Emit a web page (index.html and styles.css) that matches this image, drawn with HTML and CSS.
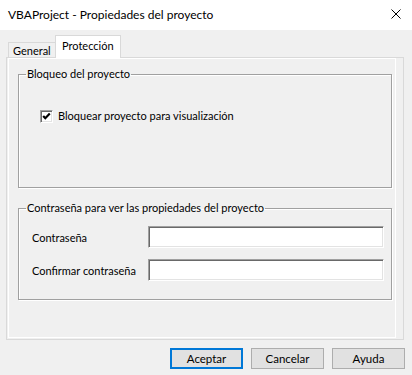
FILE: index.html
```html
<!DOCTYPE html>
<html lang="es">

<head>
    <meta charset="UTF-8">
    <meta name="viewport" content="width=device-width, initial-scale=1.0">
    <title>VBAProject - Propiedades del proyecto</title>
    <link rel="stylesheet" href="styles.css">
</head>

<body>
    <div class="titlebar">
        <span class="title">VBAProject - Propiedades del proyecto</span>
        <svg class="close" width="10" height="10" viewBox="0 0 10 10">
            <path d="M0.5 0.5 L9.5 9.5 M9.5 0.5 L0.5 9.5" stroke="#000" stroke-width="1" fill="none" />
        </svg>
    </div>

    <div class="tabs">
        <div class="tab">General</div>
        <div class="tab activo">Protección</div>
    </div>

    <div class="panel">
        <div class="pagina">
            <fieldset class="grupo bloqueo">
                <legend>Bloqueo del proyecto</legend>
                <label class="casilla">
                    <span class="caja">
                        <svg width="9" height="9" viewBox="0 0 9 9">
                            <polyline points="1.2,4 3.3,6.2 7.8,1.6" stroke="#000" stroke-width="2.2" fill="none" />
                        </svg>
                    </span>
                    Bloquear proyecto para visualización
                </label>
            </fieldset>

            <fieldset class="grupo clave">
                <legend>Contraseña para ver las propiedades del proyecto</legend>
                <div class="campos">
                    <div class="campo">
                        <label>Contraseña</label>
                        <input type="password">
                    </div>
                    <div class="campo">
                        <label>Confirmar contraseña</label>
                        <input type="password">
                    </div>
                </div>
            </fieldset>
        </div>
    </div>

    <div class="botones">
        <button class="boton defecto">Aceptar</button>
        <button class="boton">Cancelar</button>
        <button class="boton">Ayuda</button>
    </div>
</body>

</html>
```

FILE: styles.css
```css
body {
    margin: 0;
    background-color: #f0f0f0;
    font-family: "Segoe UI", Lato, sans-serif;
    font-size: 11px;
    color: #000;
}

.titlebar {
    height: 30px;
    background-color: #fff;
    display: flex;
    align-items: center;
    justify-content: space-between;
    padding: 0 11px 0 8px;
}

.title {
    font-size: 12px;
    margin-top: -2px;
}

.close {
    display: block;
    margin-top: -2px;
}

.tabs {
    display: flex;
    align-items: flex-end;
    height: 22px;
    margin-top: 5px;
    padding-left: 8px;
}

.tab {
    box-sizing: border-box;
    height: 15px;
    width: 48px;
    border: 1px solid #d9d9d9;
    border-bottom: none;
    padding-left: 4px;
    line-height: 15px;
    white-space: nowrap;
    background-color: #f0f0f0;
}

.tab.activo {
    position: relative;
    z-index: 1;
    height: 23px;
    width: 66px;
    margin-left: -1px;
    margin-bottom: -1px;
    padding-left: 6px;
    line-height: 19px;
    background-color: #fff;
}

.panel {
    box-sizing: border-box;
    height: 283px;
    margin: 0 8px 0 6px;
    border: 1px solid #d9d9d9;
}

.pagina {
    box-sizing: border-box;
    height: 280px;
    margin: 0 7px 0 1px;
    border: 1px solid #fff;
    padding-top: 8px;
    padding-left: 9px;
    padding-right: 3px;
}

.grupo {
    box-sizing: border-box;
    margin: 0;
    border: 1px solid #a0a0a0;
    box-shadow: inset 1px 1px 0 #fff, 1px 1px 0 #fff;
    padding: 0;
}

.grupo legend {
    margin-left: 7px;
    padding: 0 1px;
    line-height: 14px;
}

.bloqueo {
    height: 121px;
}

.clave {
    height: 99px;
    margin-top: 13px;
}

.casilla {
    display: flex;
    align-items: center;
    gap: 5px;
    line-height: 14px;
    margin: 28px 0 0 21px;
    white-space: nowrap;
}

.caja {
    box-sizing: border-box;
    flex-shrink: 0;
    width: 13px;
    height: 13px;
    display: flex;
    align-items: center;
    justify-content: center;
    background-color: #fff;
    border: 1px solid;
    border-color: #a0a0a0 #fff #fff #a0a0a0;
    box-shadow: inset 1px 1px 0 #696969, inset -1px -1px 0 #e3e3e3;
}

.caja svg {
    display: block;
}

.campos {
    display: flex;
    flex-direction: column;
    gap: 11px;
    margin: 11px 0 0 13px;
}

.campo {
    display: flex;
    align-items: center;
}

.campo label {
    width: 116px;
    flex-shrink: 0;
    white-space: nowrap;
}

.campo input {
    box-sizing: border-box;
    width: 236px;
    height: 22px;
    margin: 0;
    background-color: #fff;
    border: 1px solid;
    border-color: #a0a0a0 #fff #fff #a0a0a0;
    box-shadow: inset 1px 1px 0 #696969, inset -1px -1px 0 #e3e3e3;
    outline: none;
}

.botones {
    display: flex;
    justify-content: flex-end;
    gap: 8px;
    margin-top: 8px;
    padding-right: 7px;
}

.boton {
    box-sizing: border-box;
    width: 73px;
    height: 21px;
    padding: 0;
    font-family: inherit;
    font-size: 11.5px;
    color: #000;
    background-color: #e1e1e1;
    border: 1px solid #adadad;
}

.boton.defecto {
    border: 2px solid #0078d7;
}
```
